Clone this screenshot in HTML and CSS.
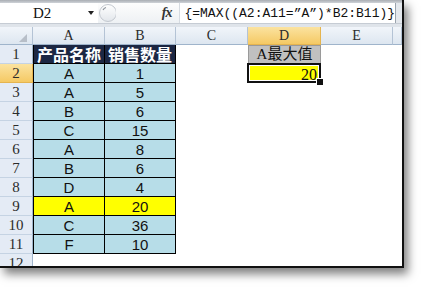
FILE: index.html
```html
<!DOCTYPE html>
<html lang="zh">
<head>
<meta charset="utf-8">
<link rel="stylesheet" href="styles.css">
</head>
<body>
<div class="frame">
  <div class="topline"></div>
  <div class="fbar">
    <div class="namebox"><span class="nb-text">D2</span><span class="arrow"></span></div>
    <div class="grip">
      <svg class="knob" width="18" height="20" viewBox="0 0 18 20"><defs><linearGradient id="g" x1="0" y1="0" x2="0" y2="1"><stop offset="0" stop-color="#ffffff"/><stop offset="1" stop-color="#e2e6eb"/></linearGradient></defs><circle cx="10" cy="10" r="8.5" fill="url(#g)" stroke="#c3c8cf"/><path d="M5 7 Q6 5 8 4.5" stroke="#8d939b" stroke-width="1.2" fill="none"/></svg>
      <span class="fx">fx</span>
    </div>
    <div class="formula">{=MAX((A2:A11=”A”)*B2:B11)}</div>
    <div class="fend"></div>
  </div>
  <div class="strip"></div>
  <div class="sheet">
    <div class="corner"><span class="tri"></span></div>
    <div class="ch">A</div><div class="ch">B</div><div class="ch">C</div><div class="ch sel">D</div><div class="ch">E</div><div class="ch"></div>

    <div class="rh">1</div><div class="th ta">产品名称</div><div class="th">销售数量</div><div class="c"></div><div class="d1">A最大值</div><div class="c"></div><div class="c"></div>
    <div class="rh sel">2</div><div class="t ta">A</div><div class="t">1</div><div class="c"></div><div class="d2">20</div><div class="c"></div><div class="c"></div>
    <div class="rh">3</div><div class="t ta">A</div><div class="t">5</div><div class="c"></div><div class="c"></div><div class="c"></div><div class="c"></div>
    <div class="rh">4</div><div class="t ta">B</div><div class="t">6</div><div class="c"></div><div class="c"></div><div class="c"></div><div class="c"></div>
    <div class="rh">5</div><div class="t ta">C</div><div class="t">15</div><div class="c"></div><div class="c"></div><div class="c"></div><div class="c"></div>
    <div class="rh">6</div><div class="t ta">A</div><div class="t">8</div><div class="c"></div><div class="c"></div><div class="c"></div><div class="c"></div>
    <div class="rh">7</div><div class="t ta">B</div><div class="t">6</div><div class="c"></div><div class="c"></div><div class="c"></div><div class="c"></div>
    <div class="rh">8</div><div class="t ta">D</div><div class="t">4</div><div class="c"></div><div class="c"></div><div class="c"></div><div class="c"></div>
    <div class="rh">9</div><div class="t ta y">A</div><div class="t y">20</div><div class="c"></div><div class="c"></div><div class="c"></div><div class="c"></div>
    <div class="rh">10</div><div class="t ta">C</div><div class="t">36</div><div class="c"></div><div class="c"></div><div class="c"></div><div class="c"></div>
    <div class="rh">11</div><div class="t ta">F</div><div class="t">10</div><div class="c"></div><div class="c"></div><div class="c"></div><div class="c"></div>
    <div class="rh">12</div><div class="c"></div><div class="c"></div><div class="c"></div><div class="c"></div><div class="c"></div><div class="c"></div>
  </div>
</div>
</body>
</html>
```
FILE: styles.css
```css
* { box-sizing: border-box; }
html, body { margin: 0; padding: 0; background: #fff; }
body { width: 424px; height: 288px; overflow: hidden; }

.frame {
  width: 404px;
  height: 268px;
  border-right: 2px solid #111;
  border-bottom: 2px solid #111;
  box-shadow: 4px 6px 9px rgba(0,0,0,0.5);
  background: #fff;
  display: flex;
  flex-direction: column;
  overflow: hidden;
}

.topline {
  height: 3px;
  background: linear-gradient(#a9adb3, #cfd3d8);
  flex: none;
}

.fbar {
  height: 20px;
  flex: none;
  display: flex;
  background: #fff;
}
.namebox {
  width: 99px;
  display: flex;
  align-items: center;
  font-family: "Liberation Serif", serif;
  font-size: 15px;
  color: #111;
  position: relative;
}
.nb-text { margin-left: 33px; }
.arrow {
  position: absolute;
  left: 88px;
  top: 8px;
  width: 0; height: 0;
  border-left: 3.5px solid transparent;
  border-right: 3.5px solid transparent;
  border-top: 4px solid #222;
}
.grip {
  width: 82px;
  display: flex;
  align-items: center;
  justify-content: space-between;
  background: linear-gradient(#fdfdfd, #eef1f4);
  padding-right: 8px;
}
.knob { display: block; }
.fx {
  font-family: "Liberation Serif", serif;
  font-style: italic;
  font-weight: bold;
  font-size: 14px;
  color: #333;
  letter-spacing: -1px;
}
.formula {
  flex: 1;
  display: flex;
  align-items: center;
  padding-left: 4px;
  font-family: "Liberation Mono", monospace;
  font-size: 13px;
  color: #111;
  border-left: 1px solid #d6dbe1;
  border-right: 1px solid #9aa3ad;
  white-space: nowrap;
}
.fend { width: 6px; background: #e4e8ed; }

.strip {
  height: 4px;
  flex: none;
  background: #dfe4ea;
  border-top: 1px solid #c6ccd4;
}

.sheet {
  flex: 1;
  display: grid;
  grid-template-columns: 33px 72px 71px 72px 73px 72px 1fr;
  grid-template-rows: 18px repeat(11, 19px) 19px;
  overflow: hidden;
}

.corner, .ch {
  background: linear-gradient(#f1f5fa, #dde6f0);
  border-right: 1px solid #b4c3d5;
  border-bottom: 1px solid #9fb4cb;
}
.corner { position: relative; }
.tri {
  position: absolute;
  right: 5px;
  bottom: 2px;
  width: 0; height: 0;
  border-left: 8px solid transparent;
  border-bottom: 8px solid #b7bec8;
}
.ch {
  display: flex;
  align-items: center;
  justify-content: center;
  font-family: "Liberation Serif", serif;
  font-size: 14px;
  color: #2b2b2b;
}
.rh {
  background: #e4ebf5;
  border-right: 1px solid #9fb4cb;
  border-bottom: 1px solid #c5d3e3;
  display: flex;
  align-items: flex-end;
  justify-content: center;
  font-family: "Liberation Serif", serif;
  font-size: 15px;
  line-height: 17px;
  color: #2b2b2b;
}
.ch.sel, .rh.sel {
  background: linear-gradient(#fbe3a0, #f5c964);
  border-right-color: #e5b44f;
  border-bottom-color: #e5b44f;
}

.c { background: #fff; }

.th, .t {
  border-right: 1px solid #000;
  border-bottom: 1px solid #000;
  display: flex;
  align-items: flex-end;
  justify-content: center;
}
.ta { border-left: 1px solid #000; }
.th {
  background: #1c2743;
  color: #fff;
  font-family: "Noto Sans CJK SC", sans-serif;
  font-weight: bold;
  font-size: 16px;
  line-height: 18px;
  align-items: center;
}
.t {
  background: #b7dde8;
  color: #111;
  font-family: "Liberation Sans", sans-serif;
  font-size: 15px;
  line-height: 17px;
}
.t.y { background: #ffff00; }

.d1 {
  background: #c0c0c0;
  border: 1px solid #9a9a9a;
  display: flex;
  align-items: center;
  justify-content: center;
  font-family: "Liberation Serif", "Noto Sans CJK SC", serif;
  font-size: 15px;
  line-height: 17px;
  color: #111;
}
.d2 {
  background: #ffff00;
  position: relative;
  display: flex;
  align-items: flex-end;
  justify-content: flex-end;
  padding-right: 4px;
  font-family: "Liberation Serif", serif;
  font-size: 16px;
  line-height: 17px;
  color: #111;
}
.d2::after {
  content: "";
  position: absolute;
  left: -1px; top: -1px; right: 0; bottom: 0;
  border: 2px solid #111;
  box-shadow: inset 0 0 0 1px #fff;
}
.d2::before {
  content: "";
  position: absolute;
  right: -3px;
  bottom: -3px;
  width: 6px;
  height: 6px;
  background: #111;
  border: 1px solid #fff;
  z-index: 2;
}
```
